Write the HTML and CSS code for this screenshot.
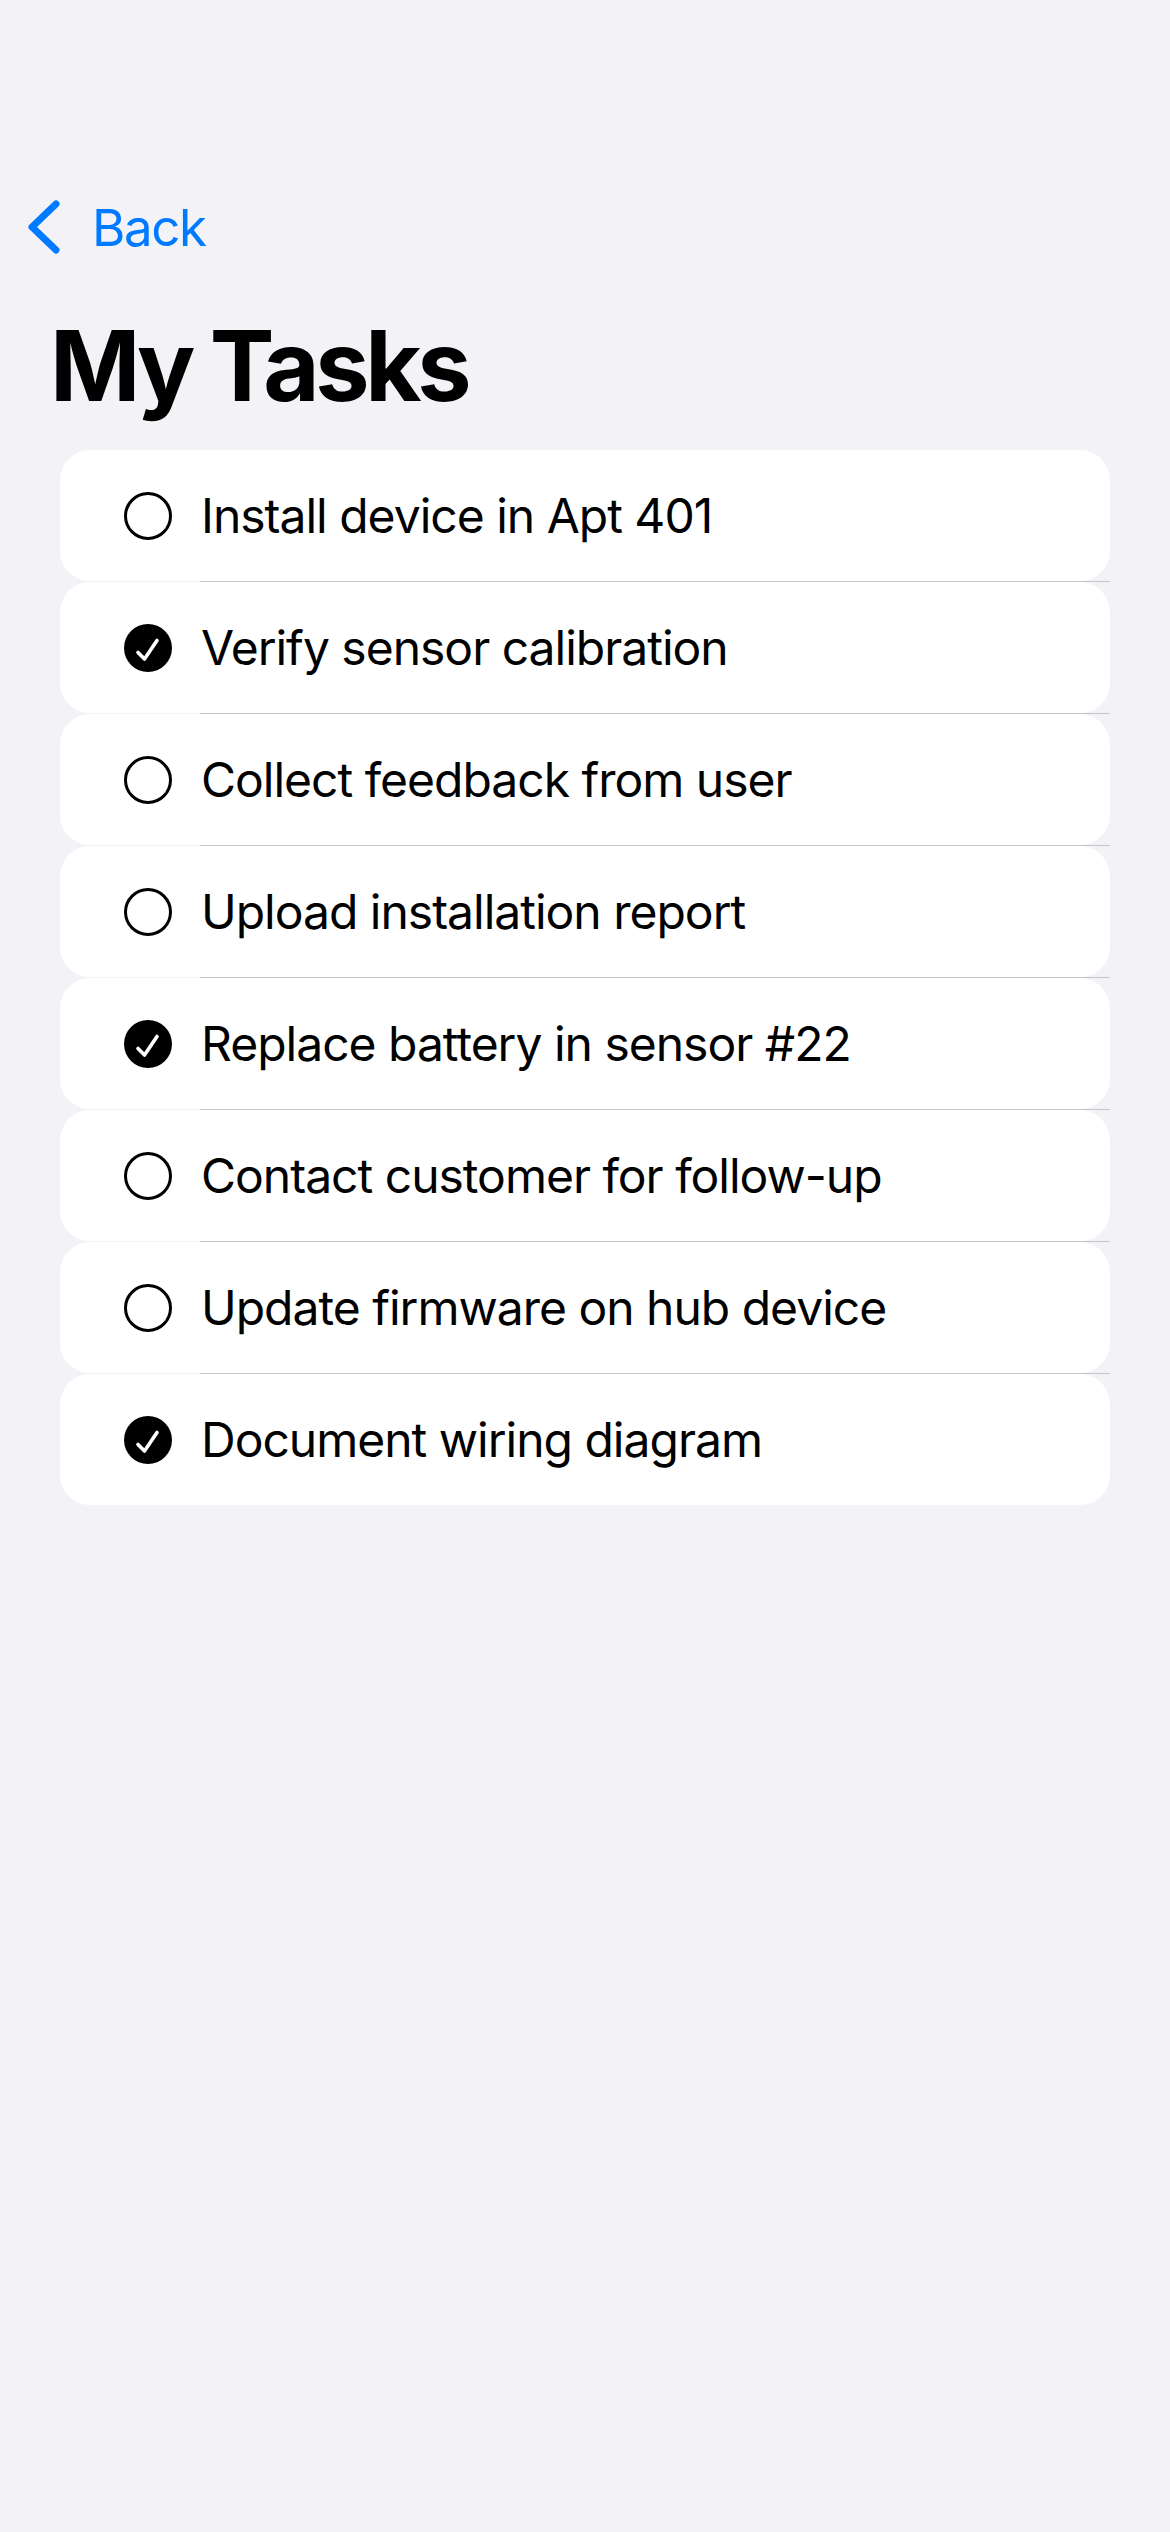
FILE: index.html
```html
<!DOCTYPE html>
<html lang="en">
<head>
<meta charset="utf-8">
<title>My Tasks</title>
<link rel="stylesheet" href="styles.css">
</head>
<body>
<div class="screen">
  <nav class="nav">
    <svg class="chevron" width="40" height="62" viewBox="0 0 40 62" aria-hidden="true">
      <path d="M34 8 L10 31 L34 54" fill="none" stroke="#007AFF" stroke-width="7" stroke-linecap="round" stroke-linejoin="round"/>
    </svg>
    <span class="back-label">Back</span>
  </nav>
  <h1 class="title">My Tasks</h1>
  <ul class="tasks">
    <li class="task"><span class="check"></span><span class="label">Install device in Apt 401</span></li>
    <li class="sep"></li>
    <li class="task"><span class="check done"><svg viewBox="0 0 48 48" width="48" height="48"><circle cx="24" cy="24" r="24" fill="#000"/><path d="M14 28.5 L20.5 35 L33 16.5" fill="none" stroke="#fff" stroke-width="3.6" stroke-linecap="round" stroke-linejoin="round"/></svg></span><span class="label">Verify sensor calibration</span></li>
    <li class="sep"></li>
    <li class="task"><span class="check"></span><span class="label">Collect feedback from user</span></li>
    <li class="sep"></li>
    <li class="task"><span class="check"></span><span class="label">Upload installation report</span></li>
    <li class="sep"></li>
    <li class="task"><span class="check done"><svg viewBox="0 0 48 48" width="48" height="48"><circle cx="24" cy="24" r="24" fill="#000"/><path d="M14 28.5 L20.5 35 L33 16.5" fill="none" stroke="#fff" stroke-width="3.6" stroke-linecap="round" stroke-linejoin="round"/></svg></span><span class="label">Replace battery in sensor #22</span></li>
    <li class="sep"></li>
    <li class="task"><span class="check"></span><span class="label">Contact customer for follow-up</span></li>
    <li class="sep"></li>
    <li class="task"><span class="check"></span><span class="label">Update firmware on hub device</span></li>
    <li class="sep"></li>
    <li class="task"><span class="check done"><svg viewBox="0 0 48 48" width="48" height="48"><circle cx="24" cy="24" r="24" fill="#000"/><path d="M14 28.5 L20.5 35 L33 16.5" fill="none" stroke="#fff" stroke-width="3.6" stroke-linecap="round" stroke-linejoin="round"/></svg></span><span class="label">Document wiring diagram</span></li>
  </ul>
</div>
</body>
</html>
```

FILE: styles.css
```css
* { box-sizing: border-box; }
html, body {
  margin: 0;
  padding: 0;
  background: #F2F2F7;
}
body {
  font-family: Inter, "Noto Sans", "Liberation Sans", sans-serif;
  color: #000;
  width: 1170px;
  min-height: 2532px;
}
.screen {
  padding-top: 190px;
}
.nav {
  display: flex;
  align-items: center;
  height: 74px;
  padding-left: 22px;
}
.chevron {
  display: block;
  flex: none;
}
.back-label {
  margin-left: 30px;
  font-size: 51px;
  line-height: 51px;
  color: #007AFF;
  letter-spacing: -1.4px;
}
.title {
  margin: 43px 0 25px 0;
  padding-left: 50px;
  font-size: 97px;
  line-height: 118px;
  font-weight: 700;
  letter-spacing: -4.3px;
}
.tasks {
  list-style: none;
  margin: 0;
  padding: 0;
}
.task {
  margin: 0 60px;
  height: 131px;
  background: #fff;
  border-radius: 30px;
  display: flex;
  align-items: center;
  padding-left: 64px;
}
.sep {
  height: 1px;
  margin-left: 200px;
  margin-right: 60px;
  background: #C6C6C8;
}
.check {
  flex: none;
  width: 48px;
  height: 48px;
  border-radius: 50%;
  border: 3.4px solid #000;
}
.check.done {
  border: none;
}
.check svg {
  display: block;
}
.label {
  margin-left: 29px;
  font-size: 48px;
  line-height: 60px;
  letter-spacing: -1px;
}
```
